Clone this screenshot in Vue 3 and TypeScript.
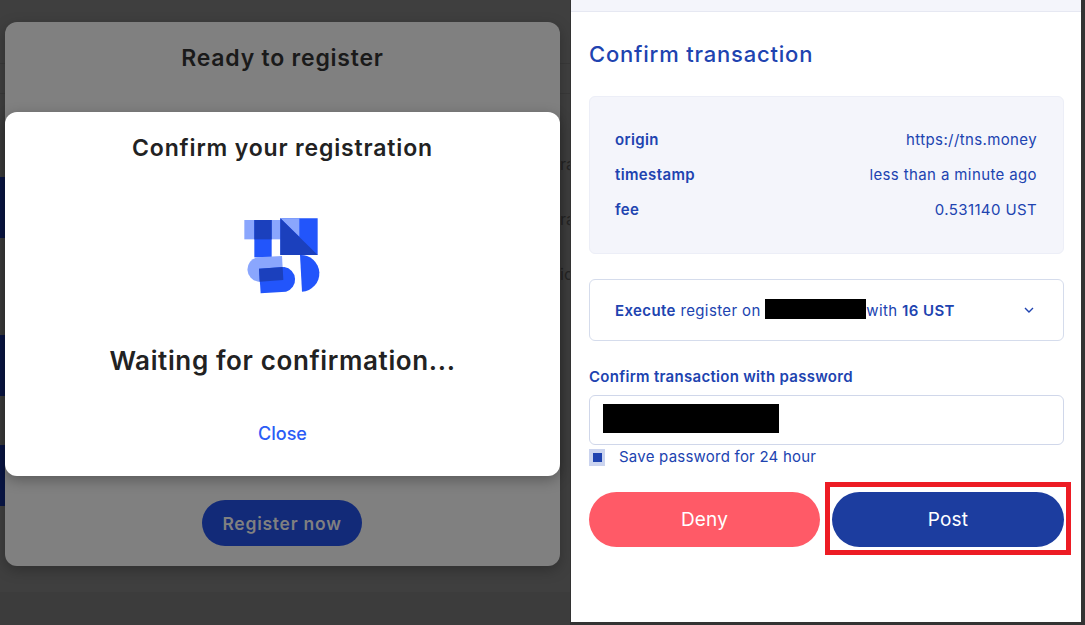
<script setup lang="ts">
const rows: { key: string; value: string }[] = [
  { key: 'origin', value: 'https://tns.money' },
  { key: 'timestamp', value: 'less than a minute ago' },
  { key: 'fee', value: '0.531140 UST' },
]
const slivers: number[] = [1, 2, 3]
</script>

<template>
  <div class="page">
    <section class="backdrop">
      <div class="edge-left">
        <i v-for="n in slivers" :key="n" class="sliver"></i>
      </div>
      <div class="edge-right">
        <span>ra</span>
        <span>ra</span>
        <span>ic</span>
      </div>
      <div class="card-back">
        <h2 class="back-title">Ready to register</h2>
        <button class="register">Register now</button>
      </div>
      <div class="card-front">
        <h2 class="front-title">Confirm your registration</h2>
        <svg class="logo" viewBox="9 0 360 330" width="120" height="110" aria-hidden="true">
          <rect x="73" y="60" width="110" height="58" fill="#8aa6fd" />
          <rect x="103" y="60" width="52" height="112" fill="#2255fb" />
          <rect x="103" y="60" width="52" height="58" fill="#1b40bd" />
          <path d="M181 55H293V165H181Z" fill="#2255fb" />
          <path d="M181 55H238V110Z" fill="#8aa6fd" />
          <path d="M181 55L293 165H181Z" fill="#1b40bd" />
          <path d="M112 172L186 168L190 240L115 245A37 37 0 0 1 112 172Z" fill="#8aa6fd" />
          <path d="M117 206L193 201A38 38 0 0 1 198 275L122 280Z" fill="#2255fb" />
          <path d="M117 206L188 201L190 240L119 245Z" fill="#1b40bd" />
          <path d="M240 165A55 55 0 0 1 246 275Z" fill="#2255fb" />
        </svg>
        <p class="waiting">Waiting for confirmation...</p>
        <a class="close">Close</a>
      </div>
    </section>

    <aside class="panel">
      <div class="panel-top"></div>
      <div class="panel-body">
        <h1 class="panel-title">Confirm transaction</h1>
        <dl class="info">
          <div v-for="row in rows" :key="row.key" class="info-row">
            <dt>{{ row.key }}</dt>
            <dd>{{ row.value }}</dd>
          </div>
        </dl>
        <div class="message">
          <p class="message-text">
            <b>Execute</b> register on <span class="redact-addr"></span>with <b>16 UST</b>
          </p>
          <svg class="chev" viewBox="0 0 10 6" width="10" height="6" aria-hidden="true">
            <path d="M1 1L5 5L9 1" fill="none" stroke="#1f43b0" stroke-width="1.4" />
          </svg>
        </div>
        <label class="pw-label">Confirm transaction with password</label>
        <div class="pw-input"><span class="redact-pw"></span></div>
        <div class="save">
          <span class="check"><i></i></span>
          <span class="save-text">Save password for 24 hour</span>
        </div>
        <div class="actions">
          <button class="btn deny">Deny</button>
          <button class="btn post">Post</button>
        </div>
      </div>
      <div class="highlight"></div>
    </aside>
  </div>
</template>

<style>
html, body { margin: 0; background: #3f3f3f; }
</style>

<style scoped>
.page {
  width: 1085px;
  height: 625px;
  display: flex;
  overflow: hidden;
  background: #333;
  font-family: Inter, "Noto Sans", sans-serif;
}
.backdrop {
  position: relative;
  width: 570px;
  flex: none;
  overflow: hidden;
  background:
    linear-gradient(#393939, #393939) 0 63px / 100% 1px no-repeat,
    linear-gradient(#393939, #393939) 0 93px / 100% 1px no-repeat,
    linear-gradient(#3c3c3c, #3c3c3c) 0 592px / 100% 33px no-repeat,
    #3f3f3f;
}
.edge-left {
  position: absolute;
  left: 0;
  top: 177px;
  width: 5px;
  display: flex;
  flex-direction: column;
  gap: 97px;
}
.sliver {
  display: block;
  height: 61px;
  background: #0a1748;
}
.sliver:nth-child(3) { margin-top: -48px; }
.edge-right {
  position: absolute;
  left: 560px;
  top: 155px;
  display: flex;
  flex-direction: column;
  gap: 36px;
  color: #262626;
  font-size: 16px;
  line-height: 19px;
}
.card-back {
  position: absolute;
  left: 5px;
  top: 22px;
  width: 555px;
  height: 544px;
  box-sizing: border-box;
  padding-top: 22px;
  background: #808080;
  border-radius: 12px;
  box-shadow: 0 4px 14px rgba(0, 0, 0, 0.25);
  display: flex;
  flex-direction: column;
  align-items: center;
}
.back-title {
  margin: 0;
  font-size: 23px;
  line-height: 28px;
  font-weight: 600;
  color: #1a1a1a;
  letter-spacing: 0.78px;
}
.register {
  margin: 428px 2px 0 0;
  padding: 0 0 0 1px;
  width: 160px;
  height: 46px;
  border: 0;
  border-radius: 23px;
  background: #122a78;
  color: #808080;
  font: 600 17.5px Inter, sans-serif;
  letter-spacing: 0.75px;
}
.card-front {
  position: absolute;
  left: 5px;
  top: 112px;
  width: 555px;
  height: 364px;
  box-sizing: border-box;
  padding-top: 22px;
  background: #fff;
  border-radius: 12px;
  box-shadow: 0 4px 14px rgba(0, 0, 0, 0.3);
  display: flex;
  flex-direction: column;
  align-items: center;
}
.front-title {
  margin: 0;
  font-size: 23px;
  line-height: 28px;
  font-weight: 600;
  color: #222;
  letter-spacing: 0.84px;
}
.logo {
  margin-top: 38px;
  display: block;
}
.waiting {
  margin: 35px 0 0;
  font-size: 26px;
  line-height: 32px;
  font-weight: 600;
  color: #222;
  letter-spacing: 0.63px;
}
.close {
  margin-top: 45px;
  font-size: 18px;
  line-height: 24px;
  font-weight: 500;
  color: #2b5cf6;
}
.panel {
  position: relative;
  width: 510px;
  height: 622px;
  margin-left: 1px;
  flex: none;
  background: #fff;
  color: #2043b0;
}
.panel-top {
  height: 11px;
  background: #f4f5fb;
  border-bottom: 1px solid #e6e8f2;
}
.panel-body {
  padding: 0 17px 0 18px;
}
.panel-title {
  margin: 28px 0 0;
  font-size: 22px;
  line-height: 28px;
  font-weight: 500;
  letter-spacing: 0.8px;
}
.info {
  margin: 28px 0 0;
  height: 158px;
  box-sizing: border-box;
  padding: 25px 26px 0 25px;
  background: #f4f5fb;
  border: 1px solid #eceef7;
  border-radius: 6px;
}
.info-row {
  display: flex;
  justify-content: space-between;
  height: 35px;
  line-height: 35px;
  font-size: 15px;
  letter-spacing: 0.38px;
}
.info-row dt { font-weight: 600; }
.info-row dd { margin: 0; }
.message {
  margin-top: 25px;
  height: 62px;
  box-sizing: border-box;
  padding: 0 29px 0 25px;
  display: flex;
  align-items: center;
  justify-content: space-between;
  border: 1px solid #d5dcec;
  border-radius: 6px;
  font-size: 15px;
  letter-spacing: 0.38px;
}
.message-text {
  margin: 0;
  display: flex;
  align-items: center;
  white-space: pre-wrap;
}
.message-text b { font-weight: 600; }
.redact-addr {
  display: block;
  width: 101px;
  height: 20px;
  margin: 0 0 2px 0;
  background: #000;
}
.pw-label {
  display: block;
  margin-top: 27px;
  font-size: 15px;
  line-height: 18px;
  font-weight: 600;
  letter-spacing: 0.29px;
}
.pw-input {
  margin-top: 9px;
  height: 50px;
  box-sizing: border-box;
  padding: 8px 13px;
  border: 1px solid #d0d7ea;
  border-radius: 6px;
}
.redact-pw {
  display: block;
  width: 176px;
  height: 29px;
  background: #000;
}
.save {
  margin-top: 4px;
  display: flex;
  align-items: flex-start;
  gap: 14px;
  font-size: 15px;
  letter-spacing: 0.23px;
}
.save-text {
  line-height: 15px;
}
.check {
  width: 16px;
  height: 17px;
  display: flex;
  align-items: center;
  justify-content: center;
  background: #cbd4ef;
}
.check i {
  display: block;
  width: 9px;
  height: 9px;
  background: #1f43b0;
}
.actions {
  margin-top: 26px;
  display: flex;
  gap: 12px;
}
.btn {
  height: 55px;
  border: 0;
  border-radius: 28px;
  color: #fff;
  font: 400 19px Inter, sans-serif;
  letter-spacing: 0.2px;
}
.deny { width: 231px; background: #ff5a67; }
.post { width: 232px; background: #1c3d9f; }
.highlight {
  position: absolute;
  left: 254px;
  top: 482px;
  width: 246px;
  height: 73px;
  box-sizing: border-box;
  border: 5px solid #ed1c24;
  pointer-events: none;
}
</style>
